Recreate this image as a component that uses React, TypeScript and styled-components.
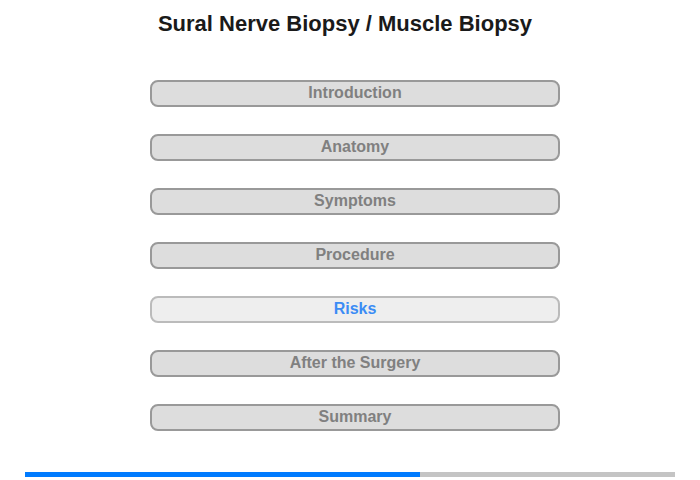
import styled, { createGlobalStyle } from "styled-components";

const GlobalStyle = createGlobalStyle`
  body {
    margin: 0;
    background: #ffffff;
    font-family: "Liberation Sans", Arial, sans-serif;
  }
`;

const Page = styled.div`
  width: 700px;
  height: 480px;
  display: flex;
  flex-direction: column;
  padding-top: 11px;
  box-sizing: border-box;
`;

const Title = styled.h1`
  margin: 0 10px 0 0;
  font-size: 22px;
  line-height: 25px;
  font-weight: bold;
  color: #1a1a1a;
  text-align: center;
`;

const Menu = styled.nav`
  display: flex;
  flex-direction: column;
  gap: 27px;
  width: 410px;
  margin: 44px 0 0 150px;
`;

const MenuButton = styled.div<{ $active?: boolean }>`
  height: 27px;
  box-sizing: border-box;
  padding: 1px 0 2px;
  border: 2px solid ${(p) => (p.$active ? "#bbbbbb" : "#999999")};
  border-radius: 8px;
  background: ${(p) => (p.$active ? "#eeeeee" : "#dddddd")};
  color: ${(p) => (p.$active ? "#3b8cf5" : "#808080")};
  font-size: 16px;
  line-height: 20px;
  font-weight: bold;
  text-align: center;
`;

const Progress = styled.div`
  display: flex;
  height: 5px;
  margin: 41px 25px 0 25px;
  background: #c4c4c4;
`;

const ProgressFill = styled.div`
  background: #007bff;
`;

const items = [
  "Introduction",
  "Anatomy",
  "Symptoms",
  "Procedure",
  "Risks",
  "After the Surgery",
  "Summary",
];

const App = () => {
  const active = 4;
  return (
    <>
      <GlobalStyle />
      <Page>
        <Title>Sural Nerve Biopsy / Muscle Biopsy</Title>
        <Menu>
          {items.map((item, i) => (
            <MenuButton key={item} $active={i === active}>
              {item}
            </MenuButton>
          ))}
        </Menu>
        <Progress>
          <ProgressFill style={{ width: "60.8%" }} />
        </Progress>
      </Page>
    </>
  );
};

export default App;
